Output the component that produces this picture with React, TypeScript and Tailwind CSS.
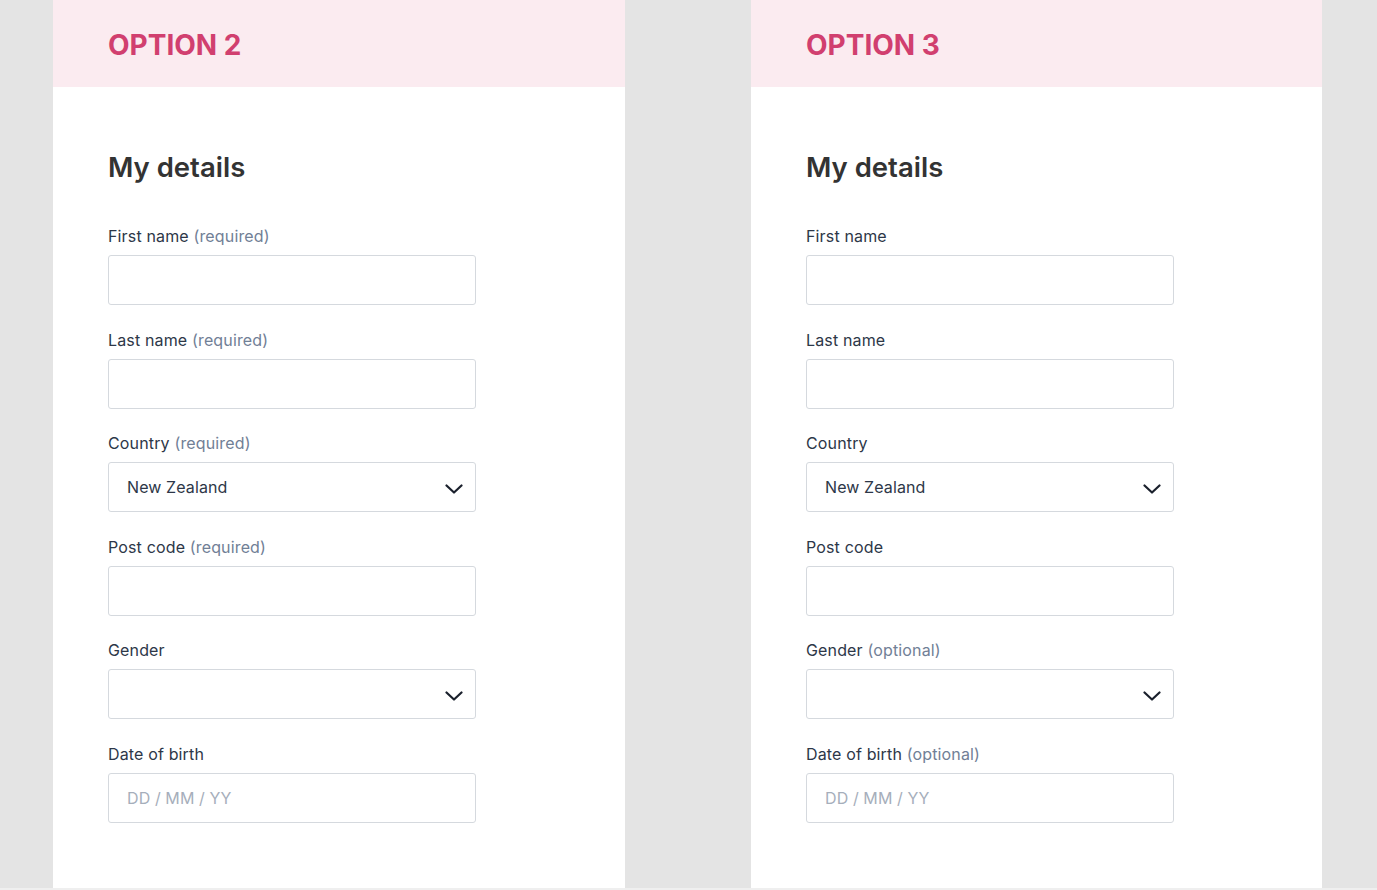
import React from 'react';

type Field = {
  label: string;
  note?: string;
  kind: 'text' | 'select' | 'date';
  value?: string;
};

const option2: Field[] = [
  { label: 'First name', note: '(required)', kind: 'text' },
  { label: 'Last name', note: '(required)', kind: 'text' },
  { label: 'Country', note: '(required)', kind: 'select', value: 'New Zealand' },
  { label: 'Post code', note: '(required)', kind: 'text' },
  { label: 'Gender', kind: 'select' },
  { label: 'Date of birth', kind: 'date' },
];

const option3: Field[] = [
  { label: 'First name', kind: 'text' },
  { label: 'Last name', kind: 'text' },
  { label: 'Country', kind: 'select', value: 'New Zealand' },
  { label: 'Post code', kind: 'text' },
  { label: 'Gender', note: '(optional)', kind: 'select' },
  { label: 'Date of birth', note: '(optional)', kind: 'date' },
];

function Chevron() {
  return (
    <svg width="18" height="10" viewBox="0 0 18 10" fill="none" className="shrink-0 translate-y-[2px]">
      <polyline points="1.5,1.5 9,8.5 16.5,1.5" stroke="#1a202c" strokeWidth="2.2" strokeLinecap="round" strokeLinejoin="round" />
    </svg>
  );
}

function FormField({ field }: { field: Field }) {
  return (
    <div className="flex flex-col">
      <label className="text-[16px] leading-6 tracking-[0.15px] text-[#2d3748] mb-[7px]">
        {field.label}
        {field.note && <span className="text-[#718096]"> {field.note}</span>}
      </label>
      <div className="w-[368px] h-[50px] border border-[#d5d9de] rounded-[3px] bg-white flex items-center justify-between pl-[18px] pr-[12px] text-[16px] tracking-[0.1px]">
        {field.kind === 'select' && (
          <>
            <span className="text-[#2d3748]">{field.value ?? ''}</span>
            <Chevron />
          </>
        )}
        {field.kind === 'date' && <span className="text-[#a6aebb]">DD / MM / YY</span>}
      </div>
    </div>
  );
}

function Panel({ title, fields, narrow }: { title: string; fields: Field[]; narrow?: boolean }) {
  return (
    <div className={`${narrow ? 'w-[571px]' : 'w-[572px]'} h-[888px] bg-white flex flex-col shrink-0`}>
      <div className="h-[87px] bg-[#fbebf0] flex items-center px-[55px] pt-[2px]">
        <h2 className="text-[28px] font-bold text-[#d13f6f]">{title}</h2>
      </div>
      <div className="px-[55px] pt-[62px]">
        <h1 className="text-[27.5px] leading-9 font-semibold text-[#333333] mb-[39px]">My details</h1>
        <div className="flex flex-col gap-[22.6px]">
          {fields.map((f) => (
            <FormField key={f.label} field={f} />
          ))}
        </div>
      </div>
    </div>
  );
}

export default function App() {
  return (
    <div className="w-[1377px] h-[890px] bg-[#e4e4e4] overflow-hidden font-['Inter',sans-serif]">
      <div className="flex gap-[126px] pl-[53px]">
        <Panel title="OPTION 2" fields={option2} />
        <Panel title="OPTION 3" fields={option3} narrow />
      </div>
      <div className="h-[2px] bg-[#efefef]" />
    </div>
  );
}
